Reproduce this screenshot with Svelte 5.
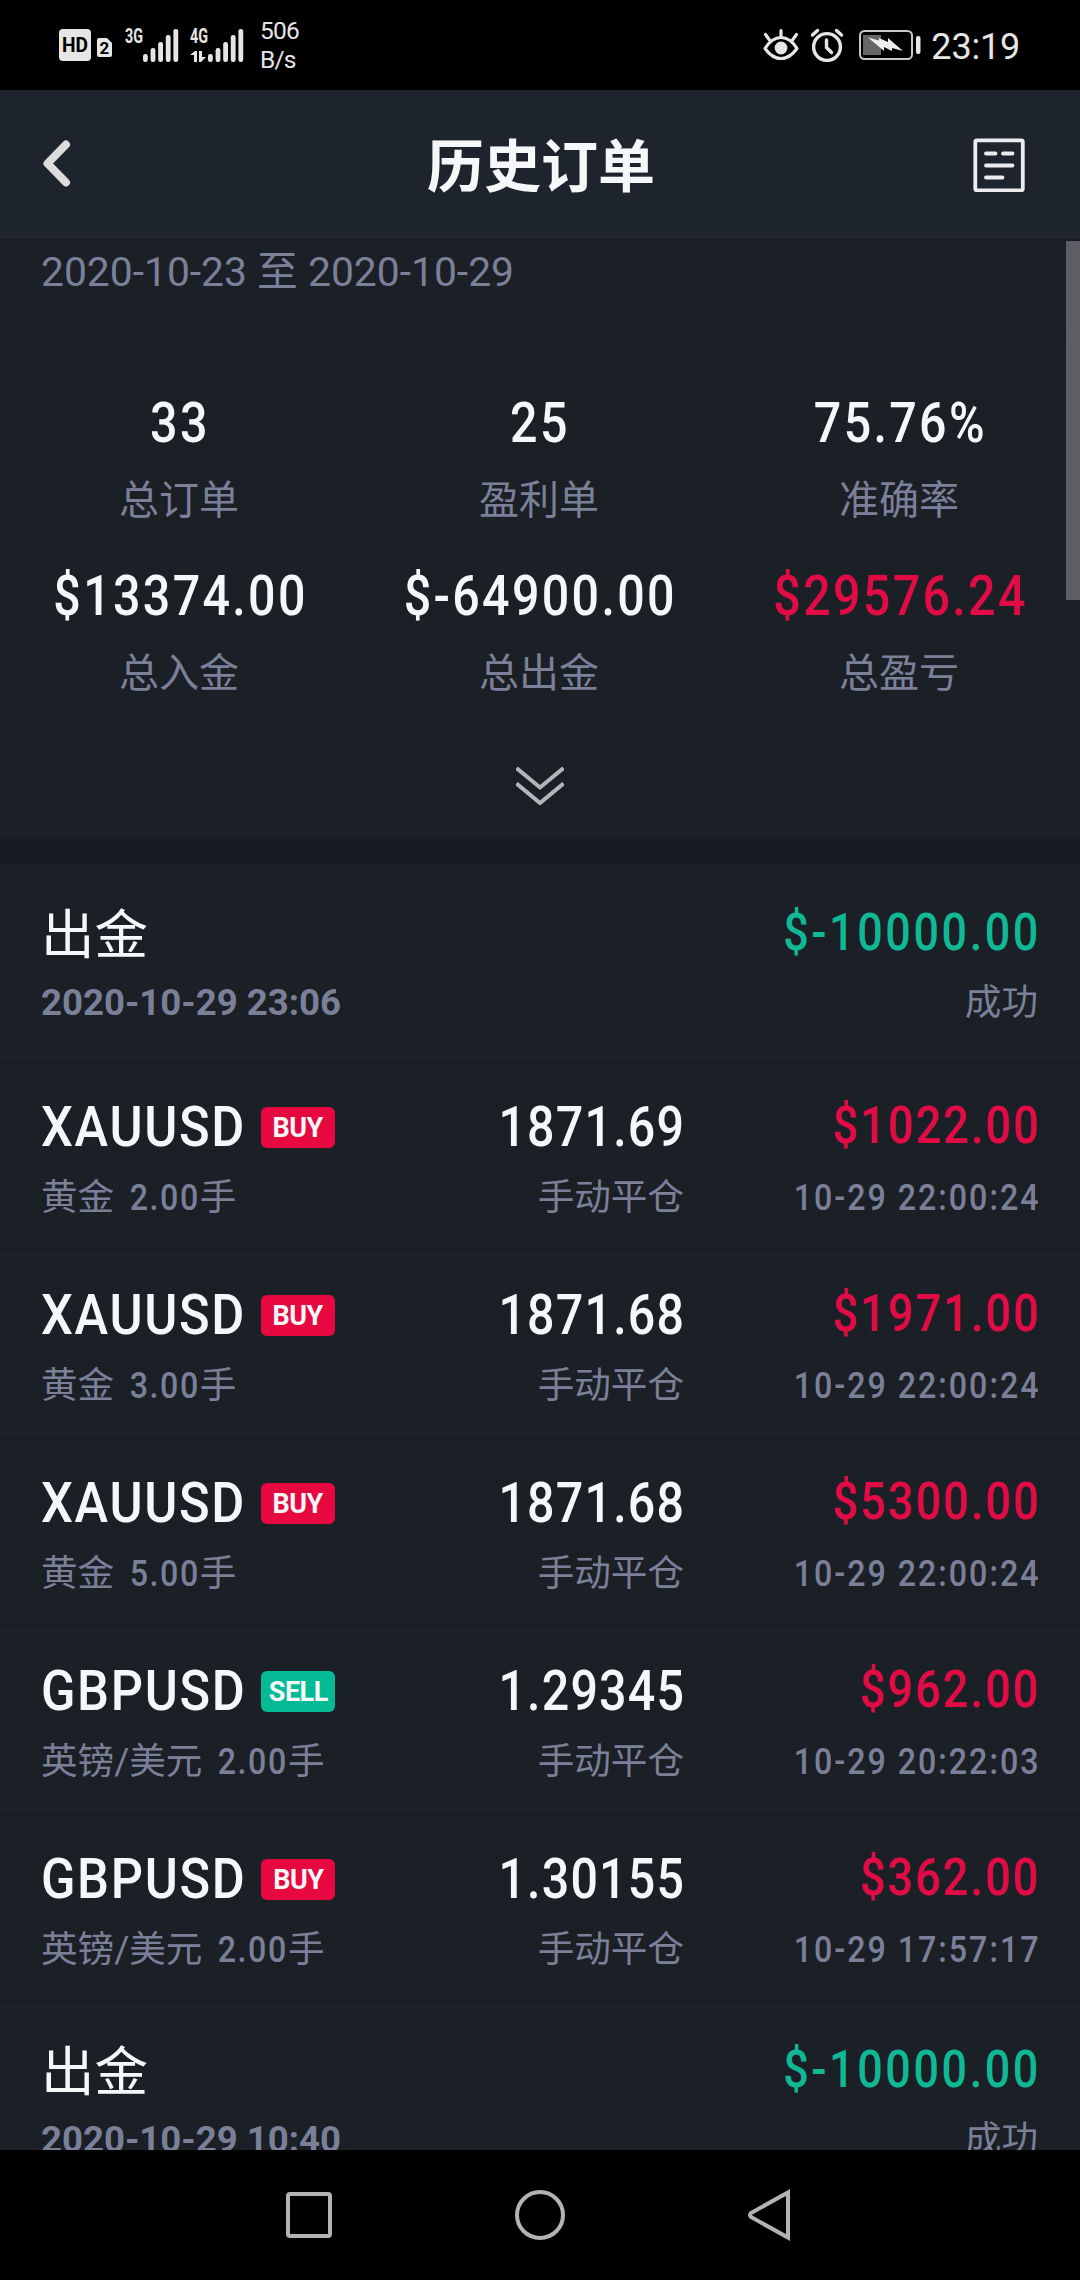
<script lang="ts">
  interface Stat {
    value: string;
    label: string;
    loss?: boolean;
  }

  interface Order {
    symbol: string;
    side: 'BUY' | 'SELL';
    name: string;
    lots: string;
    price: string;
    profit: string;
    time: string;
  }

  const stats: Stat[] = [
    { value: '33', label: '总订单' },
    { value: '25', label: '盈利单' },
    { value: '75.76%', label: '准确率' },
    { value: '$13374.00', label: '总入金' },
    { value: '$-64900.00', label: '总出金' },
    { value: '$29576.24', label: '总盈亏', loss: true },
  ];

  const orders: Order[] = [
    { symbol: 'XAUUSD', side: 'BUY', name: '黄金', lots: '2.00', price: '1871.69', profit: '$1022.00', time: '10-29 22:00:24' },
    { symbol: 'XAUUSD', side: 'BUY', name: '黄金', lots: '3.00', price: '1871.68', profit: '$1971.00', time: '10-29 22:00:24' },
    { symbol: 'XAUUSD', side: 'BUY', name: '黄金', lots: '5.00', price: '1871.68', profit: '$5300.00', time: '10-29 22:00:24' },
    { symbol: 'GBPUSD', side: 'SELL', name: '英镑/美元', lots: '2.00', price: '1.29345', profit: '$962.00', time: '10-29 20:22:03' },
    { symbol: 'GBPUSD', side: 'BUY', name: '英镑/美元', lots: '2.00', price: '1.30155', profit: '$362.00', time: '10-29 17:57:17' },
  ];

  const bars = [8, 14, 20, 27, 33];
</script>

{#snippet signal(label: string, data: boolean)}
  <svg class="signal" width="54" height="42" viewBox="0 -3 54 42">
    <text x="0" y="16" textLength="18" lengthAdjust="spacingAndGlyphs">{label}</text>
    {#each bars as h, i}
      <rect x={18 + i * 7.6} y={35 - h} width="4.8" height={h} rx="2.2" />
    {/each}
    {#if data}
      <path d="M0 28l5-4h2v11H4v-7zM9 24h3v6h4l-5 5H9z" />
    {/if}
  </svg>
{/snippet}

{#snippet withdrawal(time: string)}
  <div class="row transfer">
    <div class="col">
      <div class="main name">出金</div>
      <div class="sub when">{time}</div>
    </div>
    <div class="col end">
      <div class="main amount up"><span class="num">$-10000.00</span></div>
      <div class="sub">成功</div>
    </div>
  </div>
{/snippet}

<div class="screen">
  <div class="status">
    <svg class="hd" width="53" height="34" viewBox="0 0 53 34">
      <rect x="0" y="1" width="32" height="32" rx="4" />
      <text x="3" y="23.5" font-size="20" textLength="26" lengthAdjust="spacingAndGlyphs">HD</text>
      <path d="M40 10h8l5 5v12a2 2 0 0 1-2 2h-11a2 2 0 0 1-2-2v-15a2 2 0 0 1 2-2z" />
      <text x="40.5" y="26" font-size="17">2</text>
    </svg>
    {@render signal('3G', false)}
    {@render signal('4G', true)}
    <div class="speed">506<br />B/s</div>
    <div class="status-right">
      <svg width="36" height="34" viewBox="0 0 36 34" fill="none" stroke="#e6e6e6" stroke-width="3.2" stroke-linecap="round">
        <path d="M2 20.500C7 12.500 12 9.500 18 9.500s11 3 16 11c-5 7-10 10-16 10s-11-3-16-10z" stroke-linejoin="round" />
        <circle cx="18" cy="20" r="6.400" fill="#e6e6e6" stroke="none" />
        <path d="M18 2.500v6M2.500 6.500l4 5.500M33.500 6.500l-4 5.500" />
      </svg>
      <svg class="alarm" width="34" height="34" viewBox="0 0 34 34" fill="none" stroke="#e6e6e6" stroke-width="3.400" stroke-linecap="round">
        <circle cx="17" cy="19" r="13.400" />
        <path d="M2.500 7l5-4.500M31.500 7l-5-4.500M16.500 12v7.500l5 5" />
      </svg>
      <svg class="battery" width="62" height="30" viewBox="0 0 62 30">
        <rect x="1" y="1" width="52" height="28" rx="4.500" fill="none" stroke="#c9c9c9" stroke-width="2" />
        <rect x="4" y="5" width="18" height="20" fill="#666" />
        <path d="M9 7.500l11 3V8l9 4V8l15 13-11-3v3l-8-4v4z" fill="#eee" />
        <rect x="57" y="6" width="4.500" height="18" rx="2" fill="#e6e6e6" />
      </svg>
      <span class="clock">23:19</span>
    </div>
  </div>

  <header class="header">
    <svg width="30" height="50" viewBox="0 0 30 50" fill="none" stroke="#dcdcdc" stroke-width="8" stroke-linecap="round" stroke-linejoin="round">
      <path d="M25 5.500L6.500 24.500 25 43.500" />
    </svg>
    <h1>历史订单</h1>
    <svg width="54" height="56" viewBox="0 0 54 56" fill="none" stroke="#ececf0" stroke-width="3.800" stroke-linecap="round">
      <rect x="3.300" y="4.300" width="47.500" height="50" rx="1.500" />
      <path d="M14 17.500h9.500M31 17.500h9.500M14 29.500h26.500M14 41.500h16.500" />
    </svg>
  </header>

  <main class="scroll">
    <div class="range">2020-10-23 至 2020-10-29</div>

    <section class="summary">
      <div class="stats">
        {#each stats as s}
          <div class="stat">
            <div class="value" class:down={s.loss}><span class="num">{s.value}</span></div>
            <div class="label">{s.label}</div>
          </div>
        {/each}
      </div>
      <svg class="more" width="48" height="40" viewBox="0 0 48 40" fill="none" stroke="#b4b5b9" stroke-width="4">
        <path d="M.500 3L24 22.500 47.500 3M.500 18.500L24 38 47.500 18.500" />
      </svg>
    </section>

    <section class="list">
      {@render withdrawal('2020-10-29 23:06')}
      {#each orders as o}
        <div class="row">
          <div class="col pair">
            <div class="main symbol">
              <span class="ticker">{o.symbol}</span>
              <span class="badge" class:sell={o.side === 'SELL'}>{o.side}</span>
            </div>
            <div class="sub">{o.name}<span class="num lots">{o.lots}</span>手</div>
          </div>
          <div class="col price">
            <div class="main"><span class="num">{o.price}</span></div>
            <div class="sub">手动平仓</div>
          </div>
          <div class="col end">
            <div class="main amount down"><span class="num">{o.profit}</span></div>
            <div class="sub time"><span class="num">{o.time}</span></div>
          </div>
        </div>
      {/each}
      {@render withdrawal('2020-10-29 10:40')}
    </section>

    <div class="thumb"></div>
  </main>

  <nav class="nav">
    <svg width="52" height="52" viewBox="0 0 52 52"><rect x="5" y="5" width="42" height="42" rx="2" /></svg>
    <svg width="52" height="52" viewBox="0 0 52 52"><circle cx="26" cy="26" r="23" /></svg>
    <svg width="52" height="52" viewBox="0 0 52 52"><path d="M43 3.500v45L6 28q-2-2 0-4z" /></svg>
  </nav>
</div>

<style>
  :global(body) {
    background: #000;
  }
  .screen {
    width: 1080px;
    height: 2280px;
    display: flex;
    flex-direction: column;
    overflow: hidden;
    background: #1b1f26;
    color: #f6f7f9;
    font-family: Roboto, 'Noto Sans CJK SC', sans-serif;
  }
  svg {
    display: block;
    flex: none;
  }

  /* narrow, loosely tracked figures */
  .num {
    display: inline-block;
    font-weight: 500;
    letter-spacing: 0.048em;
    margin-right: -0.048em;
    transform: scaleX(0.88);
  }

  .status {
    flex: none;
    height: 90px;
    box-sizing: border-box;
    padding: 0 60px 0 59px;
    display: flex;
    align-items: center;
    background: #000;
    color: #e6e6e6;
    fill: #e6e6e6;
  }
  .hd {
    margin-right: 13px;
  }
  .hd text {
    fill: #000;
    font-weight: 700;
  }
  .signal {
    margin-right: 11px;
  }
  .signal text {
    font-size: 20px;
    font-weight: 700;
  }
  .speed {
    margin-left: 5px;
    font-size: 24.500px;
    line-height: 29px;
    letter-spacing: -0.800px;
  }
  .status-right {
    margin-left: auto;
    display: flex;
    align-items: center;
  }
  .alarm {
    margin-left: 11px;
  }
  .battery {
    margin-left: 15px;
  }
  .clock {
    margin-left: 10px;
    padding-top: 3px;
    font-size: 36px;
    line-height: 44px;
    letter-spacing: -0.200px;
  }

  .header {
    flex: none;
    height: 151px;
    box-sizing: border-box;
    padding: 0 54px 2px 41px;
    display: flex;
    align-items: center;
    justify-content: space-between;
    background: #1e242d;
    border-bottom: 2px solid #181b22;
  }
  h1 {
    margin: 9px 0 0 39px;
    font-size: 57px;
    font-weight: 700;
    line-height: 80px;
  }

  .scroll {
    position: relative;
    flex: 1;
    min-height: 0;
    overflow: hidden;
  }
  .range {
    height: 94px;
    padding: 0 41px;
    font-size: 40.800px;
    line-height: 62px;
    color: #7b8099;
    border-bottom: 2px solid #191c23;
  }
  .summary {
    height: 501px;
    display: flex;
    flex-direction: column;
    align-items: center;
    border-bottom: 27px solid #181b23;
  }
  .stats {
    display: grid;
    grid-template-columns: repeat(3, 360px);
    row-gap: 61px;
    padding-top: 63px;
  }
  .stat {
    height: 112px;
    box-sizing: border-box;
    text-align: center;
    border-right: 2px solid #1a1d24;
  }
  .stat:nth-child(3n) {
    border-right-color: transparent;
  }
  .value {
    height: 46px;
    font-size: 55px;
    line-height: 46px;
  }
  .label {
    margin-top: 32px;
    font-size: 40px;
    line-height: 46px;
    color: #7b8099;
  }
  .more {
    margin-top: 80px;
  }

  .row {
    height: 188px;
    box-sizing: border-box;
    padding: 32px 42px 0 41px;
    display: flex;
    border-top: 2px solid #181b22;
  }
  .transfer {
    height: 196px;
    padding-top: 36px;
  }
  .transfer:first-child {
    padding-top: 37px;
    border-top: none;
  }
  .col {
    flex: 1;
  }
  .pair {
    flex: none;
    width: 382px;
  }
  .price {
    flex: none;
    width: 261px;
    text-align: right;
  }
  .end {
    text-align: right;
  }
  .price .num,
  .end .num {
    transform-origin: right;
  }
  .price .num {
    letter-spacing: 0.024em;
    margin-right: -0.024em;
  }
  .transfer .num {
    letter-spacing: 0.058em;
    margin-right: -0.058em;
  }
  .time .num {
    letter-spacing: 0.062em;
    margin-right: -0.062em;
  }
  .main {
    height: 64px;
    font-size: 55px;
    line-height: 64px;
    font-weight: 500;
  }
  .name {
    font-size: 53.500px;
    line-height: 68px;
    font-weight: 400;
  }
  .symbol {
    display: flex;
    align-items: center;
  }
  .ticker {
    margin-right: -18px;
    letter-spacing: 1.800px;
    transform: scaleX(0.92);
    transform-origin: left;
  }
  .amount {
    font-size: 51px;
    line-height: 61px;
  }
  .up {
    color: #10b896;
  }
  .down {
    color: #e10c46;
  }
  .sub {
    height: 44px;
    margin-top: 17px;
    font-size: 36.600px;
    line-height: 44px;
    color: #7b8099;
  }
  .transfer .sub {
    margin-top: 15px;
  }
  .when {
    font-weight: 700;
  }
  .lots {
    margin: 0 -5px 0 11px;
  }
  .badge {
    width: 74px;
    height: 41px;
    margin-left: 15px;
    border-radius: 6px;
    background: #e70840;
    font-size: 27px;
    line-height: 43px;
    font-weight: 700;
    letter-spacing: -0.500px;
    text-align: center;
  }
  .badge.sell {
    background: #04ba95;
  }

  .thumb {
    position: absolute;
    top: 0;
    right: 0;
    width: 14px;
    height: 359px;
    background: #5c5e64;
  }

  .nav {
    flex: none;
    height: 130px;
    display: flex;
    align-items: center;
    justify-content: center;
    gap: 179px;
    fill: none;
    stroke: #b3b3b3;
    stroke-width: 4px;
    background: #000;
  }
</style>
